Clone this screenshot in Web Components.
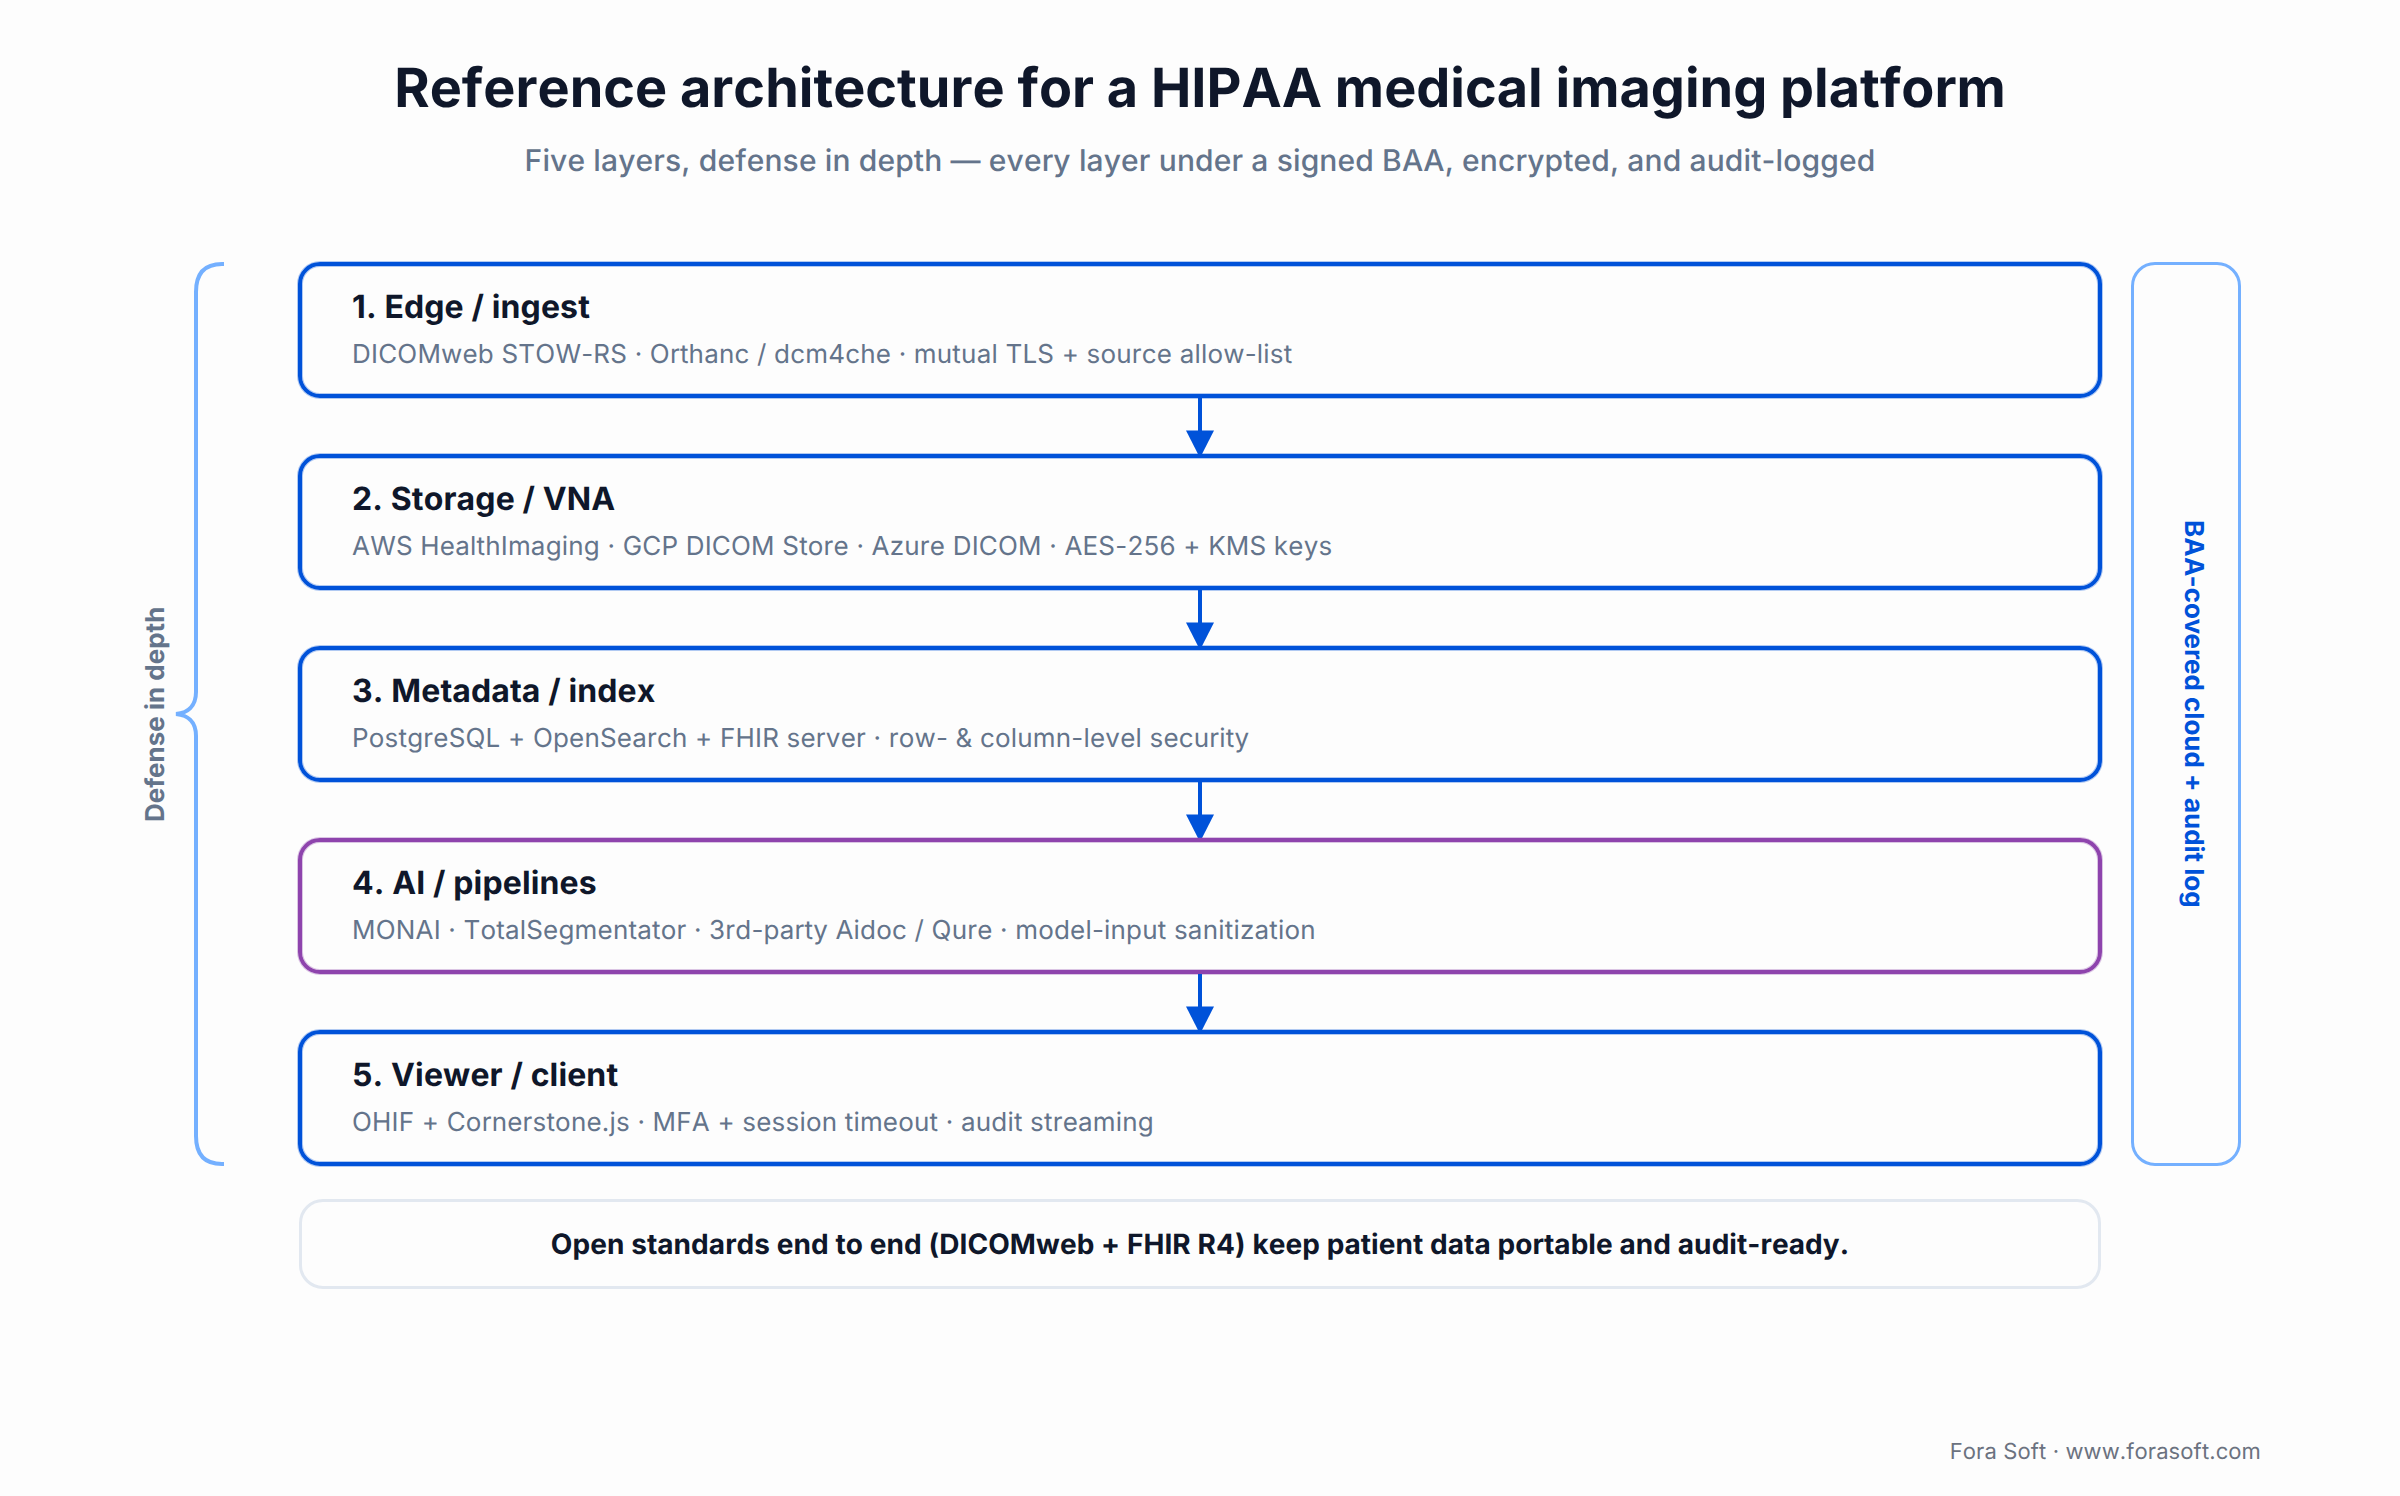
<!DOCTYPE html>
<html>
<head>
<meta charset="utf-8">
<title>HIPAA imaging architecture</title>
<style>
	html, body { margin: 0; background: #fdfdfd; }
	body { font-family: Inter, "Liberation Sans", sans-serif; width: 2400px; height: 1496px; overflow: hidden; text-rendering: geometricPrecision; font-kerning: none; }
</style>
</head>
<body>
<arch-page>
	<arch-header slot="header" heading="Reference architecture for a HIPAA medical imaging platform" sub="Five layers, defense in depth — every layer under a signed BAA, encrypted, and audit-logged"></arch-header>
	<arch-brace slot="left" label="Defense in depth"></arch-brace>
	<layer-box heading="1. Edge / ingest" sub="DICOMweb STOW-RS · Orthanc / dcm4che · mutual TLS + source allow-list"></layer-box>
	<flow-arrow></flow-arrow>
	<layer-box heading="2. Storage / VNA" sub="AWS HealthImaging · GCP DICOM Store · Azure DICOM · AES-256 + KMS keys"></layer-box>
	<flow-arrow></flow-arrow>
	<layer-box heading="3. Metadata / index" sub="PostgreSQL + OpenSearch + FHIR server · row- &amp; column-level security"></layer-box>
	<flow-arrow></flow-arrow>
	<layer-box tone="ai" heading="4. AI / pipelines" sub="MONAI · TotalSegmentator · 3rd-party Aidoc / Qure · model-input sanitization"></layer-box>
	<flow-arrow></flow-arrow>
	<layer-box heading="5. Viewer / client" sub="OHIF + Cornerstone.js · MFA + session timeout · audit streaming"></layer-box>
	<side-panel slot="right" label="BAA-covered cloud + audit log"></side-panel>
	<span slot="note">Open standards end to end (DICOMweb + FHIR R4) keep patient data portable and audit-ready.</span>
	<span slot="credit">Fora Soft · www.forasoft.com</span>
</arch-page>

<script>
const pageTemplate = document.createElement('template');
pageTemplate.innerHTML = `
	<style>
		:host { display: flex; flex-direction: column; width: 2400px; height: 1496px; color: #0f172a; }
		.body { display: flex; align-items: stretch; margin-top: 30px; }
		.stack { display: flex; flex-direction: column; width: 1804px; }
		.right { display: flex; margin-left: 29px; }
		.note {
			box-sizing: border-box;
			display: flex;
			align-items: center;
			justify-content: center;
			width: 1802px;
			height: 90px;
			margin: 33px 0 0 299px;
			border: 3px solid #e2e8f0;
			border-radius: 24px;
			font-size: 28px;
			font-weight: 700;
			letter-spacing: .08px;
		}
		.credit {
			margin: 148px 139px 0 0;
			text-align: right;
			font-size: 22px;
			line-height: 30px;
			letter-spacing: .11px;
			color: #6b7280;
		}
	</style>
	<slot name="header"></slot>
	<div class="body">
		<slot name="left"></slot>
		<div class="stack"><slot></slot></div>
		<div class="right"><slot name="right"></slot></div>
	</div>
	<div class="note"><slot name="note"></slot></div>
	<div class="credit"><slot name="credit"></slot></div>
`;

class ArchPage extends HTMLElement {
	constructor() {
		super();
		this.attachShadow({mode: 'open'});
		this.shadowRoot.appendChild(pageTemplate.content.cloneNode(true));
	}
}
customElements.define('arch-page', ArchPage);

const headerTemplate = document.createElement('template');
headerTemplate.innerHTML = `
	<style>
		:host { display: block; text-align: center; height: 232px; box-sizing: border-box; padding-top: 57px; }
		h1 { margin: 0; font-size: 54px; line-height: 64px; font-weight: 700; color: #0f172a; }
		p { margin: 20px 0 0; font-size: 30px; line-height: 40px; font-weight: 500; letter-spacing: .13px; color: #64748b; }
	</style>
	<h1></h1>
	<p></p>
`;

class ArchHeader extends HTMLElement {
	constructor() {
		super();
		this.attachShadow({mode: 'open'});
		this.shadowRoot.appendChild(headerTemplate.content.cloneNode(true));
	}

	connectedCallback() {
		this.shadowRoot.querySelector('h1').textContent = this.getAttribute('heading');
		this.shadowRoot.querySelector('p').textContent = this.getAttribute('sub');
	}
}
customElements.define('arch-header', ArchHeader);

const layerTemplate = document.createElement('template');
layerTemplate.innerHTML = `
	<style>
		:host {
			--line: 0, 82, 217;
			display: block;
			box-sizing: border-box;
			height: 136px;
			padding: 19px 50px 0;
			border: 4px solid rgb(var(--line));
			border-radius: 22px;
			box-shadow: 0 0 0 1px rgba(var(--line), .3), inset 0 0 0 1px rgba(var(--line), .3);
		}
		:host([tone="ai"]) { --line: 142, 68, 173; }
		.title { font-size: 32px; line-height: 44px; font-weight: 700; letter-spacing: .12px; color: #0f172a; }
		.sub { margin-top: 6px; font-size: 26px; line-height: 40px; letter-spacing: .19px; color: #64748b; }
	</style>
	<div class="title"></div>
	<div class="sub"></div>
`;

class LayerBox extends HTMLElement {
	constructor() {
		super();
		this.attachShadow({mode: 'open'});
		this.shadowRoot.appendChild(layerTemplate.content.cloneNode(true));
	}

	connectedCallback() {
		this.shadowRoot.querySelector('.title').textContent = this.getAttribute('heading');
		this.shadowRoot.querySelector('.sub').textContent = this.getAttribute('sub');
	}
}
customElements.define('layer-box', LayerBox);

const arrowTemplate = document.createElement('template');
arrowTemplate.innerHTML = `
	<style>
		:host { display: flex; justify-content: center; height: 56px; }
		svg { display: block; width: 28px; height: 56px; overflow: visible; }
	</style>
	<svg viewBox="0 0 28 56">
		<rect x="12" y="0" width="4" height="34" fill="#0052d9"/>
		<path d="M0 32.5 H28 L14 60 Z" fill="#0052d9"/>
	</svg>
`;

class FlowArrow extends HTMLElement {
	constructor() {
		super();
		this.attachShadow({mode: 'open'});
		this.shadowRoot.appendChild(arrowTemplate.content.cloneNode(true));
	}
}
customElements.define('flow-arrow', FlowArrow);

const braceTemplate = document.createElement('template');
braceTemplate.innerHTML = `
	<style>
		:host { display: flex; align-items: stretch; margin-right: 74px; margin-left: 136px; }
		.label {
			display: flex;
			align-items: center;
			writing-mode: vertical-rl;
			transform: rotate(180deg);
			width: 38px;
			justify-content: center;
			font-size: 26px;
			font-weight: 700;
			color: #64748b;
		}
		svg { display: block; width: 50px; height: 904px; }
	</style>
	<div class="label"></div>
	<svg viewBox="0 0 50 904" fill="none">
		<path d="M50 2 H48 Q22 2 22 30 V430 C22 445 13 451 2 452 C13 453 22 459 22 474 V874 Q22 902 48 902 H50" stroke="#74b0ff" stroke-width="4"/>
	</svg>
`;

class ArchBrace extends HTMLElement {
	constructor() {
		super();
		this.attachShadow({mode: 'open'});
		this.shadowRoot.appendChild(braceTemplate.content.cloneNode(true));
	}

	connectedCallback() {
		this.shadowRoot.querySelector('.label').textContent = this.getAttribute('label');
	}
}
customElements.define('arch-brace', ArchBrace);

const panelTemplate = document.createElement('template');
panelTemplate.innerHTML = `
	<style>
		:host {
			display: flex;
			box-sizing: border-box;
			width: 110px;
			align-items: center;
			justify-content: center;
			padding-left: 15px;
			border: 3px solid #74b0ff;
			border-radius: 24px;
		}
		span { writing-mode: vertical-rl; font-size: 26px; font-weight: 700; color: #0052d9; }
	</style>
	<span></span>
`;

class SidePanel extends HTMLElement {
	constructor() {
		super();
		this.attachShadow({mode: 'open'});
		this.shadowRoot.appendChild(panelTemplate.content.cloneNode(true));
	}

	connectedCallback() {
		this.shadowRoot.querySelector('span').textContent = this.getAttribute('label');
	}
}
customElements.define('side-panel', SidePanel);
</script>
</body>
</html>
